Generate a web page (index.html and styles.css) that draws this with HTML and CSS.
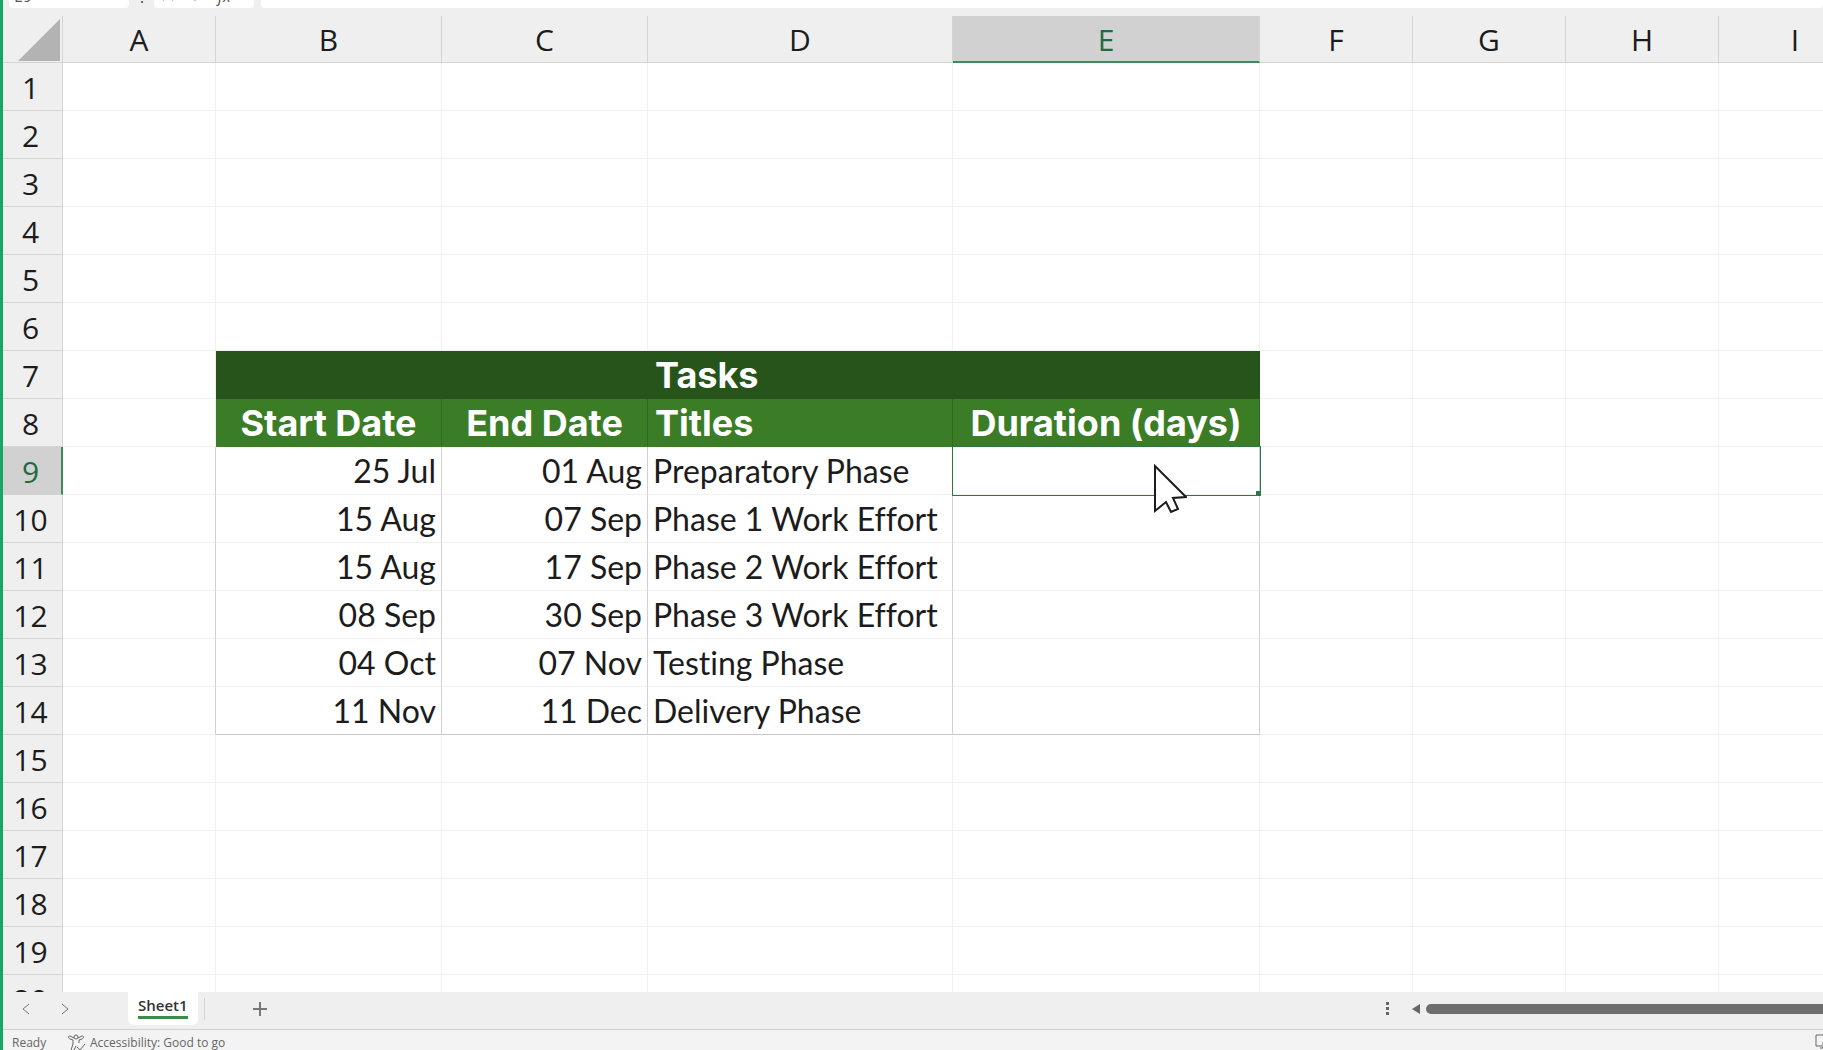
FILE: index.html
```
<!DOCTYPE html>
<html lang="en">
  <head>
    <meta charset="UTF-8" />
    <meta name="viewport" content="width=device-width, initial-scale=1.0" />
    <title>Tasks</title>
    <link rel="stylesheet" href="styles.css">
  </head>
  <body>
    <div class="window">
      <div class="formula-bar">
        <input class="name-box" type="text" value="E9" aria-label="Name box" />
        <span class="grip">⋮</span>
        <div class="formula-tools">
          <button type="button" aria-label="Cancel"><svg width="12" height="12" viewBox="0 0 12 12"><path d="M1 1l10 10M11 1L1 11" /></svg></button>
          <button type="button" aria-label="Enter"><svg width="12" height="12" viewBox="0 0 12 12"><path d="M1 7l4 4 6-9" /></svg></button>
          <button class="fx" type="button">fx</button>
        </div>
        <input class="formula" type="text" aria-label="Formula" />
      </div>

      <main class="sheet">
        <table class="grid">
          <colgroup>
            <col class="col-num" />
            <col class="col-std" />
            <col class="col-start" />
            <col class="col-end" />
            <col class="col-title" />
            <col class="col-duration" />
            <col class="col-std" />
            <col class="col-std" />
            <col class="col-std" />
            <col class="col-std" />
          </colgroup>
          <thead>
            <tr>
              <th class="corner"><svg width="42" height="42" viewBox="0 0 42 42"><path d="M42 0v42H0z" /></svg></th>
              <th>A</th><th>B</th><th>C</th><th>D</th><th class="active">E</th><th>F</th><th>G</th><th>H</th><th>I</th>
            </tr>
          </thead>
          <tbody>
            <tr><th>1</th><td></td><td></td><td></td><td></td><td></td><td></td><td></td><td></td><td></td></tr>
            <tr><th>2</th><td></td><td></td><td></td><td></td><td></td><td></td><td></td><td></td><td></td></tr>
            <tr><th>3</th><td></td><td></td><td></td><td></td><td></td><td></td><td></td><td></td><td></td></tr>
            <tr><th>4</th><td></td><td></td><td></td><td></td><td></td><td></td><td></td><td></td><td></td></tr>
            <tr><th>5</th><td></td><td></td><td></td><td></td><td></td><td></td><td></td><td></td><td></td></tr>
            <tr><th>6</th><td></td><td></td><td></td><td></td><td></td><td></td><td></td><td></td><td></td></tr>
            <tr class="banner"><th>7</th><td></td><td class="fill"></td><td class="fill"></td><td class="fill">Tasks</td><td class="fill"></td><td></td><td></td><td></td><td></td></tr>
            <tr class="heads"><th>8</th><td></td><td class="fill center">Start Date</td><td class="fill center">End Date</td><td class="fill">Titles</td><td class="fill center">Duration (days)</td><td></td><td></td><td></td><td></td></tr>
            <tr class="task">
              <th class="active">9</th><td></td><td>25 Jul</td><td>01 Aug</td><td>Preparatory Phase</td>
              <td class="selected">
                <svg class="cursor" width="34" height="50" viewBox="0 0 34 50"><path d="M2 2v45l11-9 5 10 7-3-5-11 13-1z" /></svg>
              </td>
              <td></td><td></td><td></td><td></td>
            </tr>
            <tr class="task"><th>10</th><td></td><td>15 Aug</td><td>07 Sep</td><td>Phase 1 Work Effort</td><td></td><td></td><td></td><td></td><td></td></tr>
            <tr class="task"><th>11</th><td></td><td>15 Aug</td><td>17 Sep</td><td>Phase 2 Work Effort</td><td></td><td></td><td></td><td></td><td></td></tr>
            <tr class="task"><th>12</th><td></td><td>08 Sep</td><td>30 Sep</td><td>Phase 3 Work Effort</td><td></td><td></td><td></td><td></td><td></td></tr>
            <tr class="task"><th>13</th><td></td><td>04 Oct</td><td>07 Nov</td><td>Testing Phase</td><td></td><td></td><td></td><td></td><td></td></tr>
            <tr class="task last"><th>14</th><td></td><td>11 Nov</td><td>11 Dec</td><td>Delivery Phase</td><td></td><td></td><td></td><td></td><td></td></tr>
            <tr><th>15</th><td></td><td></td><td></td><td></td><td></td><td></td><td></td><td></td><td></td></tr>
            <tr><th>16</th><td></td><td></td><td></td><td></td><td></td><td></td><td></td><td></td><td></td></tr>
            <tr><th>17</th><td></td><td></td><td></td><td></td><td></td><td></td><td></td><td></td><td></td></tr>
            <tr><th>18</th><td></td><td></td><td></td><td></td><td></td><td></td><td></td><td></td><td></td></tr>
            <tr><th>19</th><td></td><td></td><td></td><td></td><td></td><td></td><td></td><td></td><td></td></tr>
            <tr><th>20</th><td></td><td></td><td></td><td></td><td></td><td></td><td></td><td></td><td></td></tr>
          </tbody>
        </table>
      </main>

      <nav class="tabs">
        <button class="arrow" type="button" aria-label="Previous sheet"><svg width="8" height="12" viewBox="0 0 8 12"><path d="M7 1L1 6l6 5" /></svg></button>
        <button class="arrow" type="button" aria-label="Next sheet"><svg width="8" height="12" viewBox="0 0 8 12"><path d="M1 1l6 5-6 5" /></svg></button>
        <button class="tab" type="button"><span>Sheet1</span></button>
        <button class="add" type="button" aria-label="New sheet"><svg width="14" height="14" viewBox="0 0 14 14"><path d="M7 0v14M0 7h14" /></svg></button>
        <div class="scroller">
          <svg class="dots" width="4" height="14" viewBox="0 0 4 14"><path d="M0 0h3v3H0zM0 5h3v3H0zM0 10h3v3H0z" /></svg>
          <svg class="scroll-left" width="8" height="12" viewBox="0 0 8 12"><path d="M8 1v10L0 6z" /></svg>
          <div class="thumb"></div>
        </div>
      </nav>

      <footer class="status">
        <span class="ready">Ready</span>
        <svg class="access" width="18" height="18" viewBox="0 0 18 18"><circle cx="8" cy="3" r="2" /><path d="M6 4L2 2C0 2 0 4 2 5l3 1v4l-2 6c0 2 2 2 3 0l2-4M10 4l4-2c2 0 2 2 0 3l-3 1v3M9 13l3 3 5-6" /></svg>
        <span>Accessibility: Good to go</span>
        <svg class="display" width="16" height="16" viewBox="0 0 16 16"><path d="M7 12H1V1h14v4M5 14h4M8 8h7v6H8z" /></svg>
      </footer>
    </div>
  </body>
</html>
```
FILE: styles.css
```
* {
  box-sizing: border-box;
}

body {
  margin: 0;
  background: #efefef;
  font-family: "Open Sans", "Noto Sans", sans-serif;
  color: #1c1c1c;
  overflow: hidden;
}

button,
input {
  border: 0;
  padding: 0;
  background: none;
  font: inherit;
  color: inherit;
}

svg {
  display: block;
  fill: none;
  stroke: currentColor;
}

.window {
  display: flex;
  flex-direction: column;
  height: 100vh;
  border-left: 3px solid #16a765;
}

/* only the lower edge of the formula bar shows */
.formula-bar {
  display: flex;
  align-items: flex-end;
  flex: none;
  height: 16px;
  padding: 0 0 8px 6px;
  overflow: hidden;
  font-size: 16px;
  line-height: 24px;
  color: #555;
}

.name-box,
.formula-tools,
.formula {
  flex: none;
  height: 24px;
  border-radius: 4px;
  background: #fff;
}

.name-box {
  width: 120px;
  padding: 0 5px;
}

.grip {
  width: 25px;
  text-align: center;
}

.formula-tools {
  display: flex;
  align-items: center;
  gap: 16px;
  width: 100px;
  margin-right: 7px;
  padding-left: 8px;
}

.formula-tools svg {
  stroke: #bbb;
}

.fx {
  font-style: italic;
}

.formula {
  flex: 1;
}

.sheet {
  flex: 1;
  min-height: 0;
  overflow: hidden;
  background: #fff;
}

.grid {
  table-layout: fixed;
  width: 1869px;
  border-spacing: 0;
}

.col-num {
  width: 60px;
}

.col-std {
  width: 153px;
}

.col-start {
  width: 226px;
}

.col-end {
  width: 206px;
}

.col-title {
  width: 305px;
}

.col-duration {
  width: 307px;
}

.grid th,
.grid td {
  height: 48px;
  padding: 0;
  border-right: 1px solid #f0f0f0;
  border-bottom: 1px solid #f0f0f0;
  white-space: nowrap;
  line-height: 40px;
}

.grid th {
  padding-top: 2px;
  background: #efefef;
  border-color: #d4d4d4;
  font-size: 30px;
  font-weight: 400;
}

.grid tbody th {
  padding-right: 4px;
}

.grid thead th {
  height: 47px;
}

.grid .corner svg {
  margin-left: 15px;
  fill: #b3b3b3;
  stroke: none;
}

.grid th.active {
  background: #d1d1d1;
  color: #1e6b41;
}

.grid thead .active {
  border-bottom: 2px solid #3d8a5b;
}

.grid tbody .active {
  padding-right: 3px;
  border-right: 2px solid #3d8a5b;
}

.grid .fill {
  padding: 0 7px;
  color: #fff;
  font-family: Inter, sans-serif;
  font-size: 36px;
  font-weight: 700;
}

.banner .fill {
  background: #27541b;
  border-color: #27541b;
}

.heads .fill {
  background: #3b7d27;
  border-right-color: #2f6a20;
  border-bottom-color: #3b7d27;
}

.grid .center {
  padding: 0;
  text-align: center;
}

.task td {
  font-family: Lato, sans-serif;
  font-size: 32px;
  font-variant-ligatures: none;
}

.task td:nth-child(3),
.task td:nth-child(4) {
  padding-right: 5px;
  text-align: right;
}

.task td:nth-child(5) {
  padding-left: 5px;
}

.task td:nth-child(n + 2):nth-child(-n + 6) {
  border-right-color: #d0d0d0;
}

.last td:nth-child(n + 3):nth-child(-n + 6) {
  border-bottom-color: #c8c8c8;
}

.grid .selected {
  position: relative;
  outline: 1px solid #2f7549;
}

.selected::after {
  content: "";
  position: absolute;
  right: -2px;
  bottom: -2px;
  width: 5px;
  height: 5px;
  background: #2f7549;
}

/* mouse pointer lies over the selected cell */
.cursor {
  position: absolute;
  z-index: 1;
  top: 17px;
  left: 200px;
  fill: #fff;
  stroke: #1c1c1c;
  stroke-width: 2;
}

.tabs {
  display: flex;
  align-items: center;
  flex: none;
  height: 38px;
  padding-bottom: 4px;
  border-bottom: 1px solid #d0d0d0;
  color: #777;
}

.arrow {
  width: 39px;
  padding-left: 19px;
}

.tab {
  height: 33px;
  margin-left: 47px;
  padding: 0 10px 4px;
  border-radius: 0 0 6px 6px;
  background: #fff;
  color: #333;
  font-size: 15px;
  font-weight: 600;
}

.tab span {
  display: block;
  border-bottom: 3px solid #3d8a4b;
  line-height: 22px;
}

.add {
  margin-left: 6px;
  padding: 4px 48px;
  border-left: 1px solid #d4d4d4;
}

.add svg {
  stroke-width: 2;
}

.scroller {
  display: flex;
  align-items: center;
  width: 24%;
  margin-left: auto;
  color: #666;
}

.scroller svg {
  flex: none;
  fill: currentColor;
  stroke: none;
}

.scroll-left {
  margin: 0 6px 0 22px;
}

.thumb {
  flex: 1;
  height: 10px;
  border-radius: 5px 0 0 5px;
  background: #6e6e6e;
}

.status {
  display: flex;
  flex: none;
  height: 20px;
  padding: 4px 0 0 9px;
  overflow: hidden;
  background: #f3f3f3;
  color: #666;
  font-size: 12px;
  line-height: 18px;
  white-space: nowrap;
}

.ready {
  width: 56px;
}

.access {
  margin-right: 4px;
}

.display {
  flex: none;
  margin-left: auto;
  margin-right: -8px;
}
```
